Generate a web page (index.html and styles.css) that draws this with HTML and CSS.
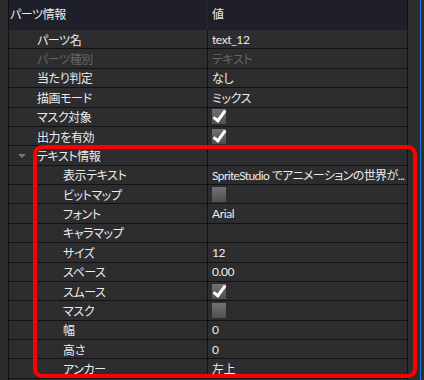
FILE: index.html
```html
<!DOCTYPE html>
<html lang="ja">
<head>
    <meta charset="UTF-8">
    <title>パーツ情報</title>
    <link rel="stylesheet" href="styles.css">
</head>
<body>

    <div class="window">
        <div class="side-left"></div>

        <!-- Property grid -->
        <div class="grid">
            <div class="head">
                <div class="cell label">パーツ情報</div>
                <div class="cell value">値</div>
            </div>

            <div class="row">
                <div class="cell label top">パーツ名</div>
                <div class="cell value">text_12</div>
            </div>
            <div class="row disabled">
                <div class="cell label top">パーツ種別</div>
                <div class="cell value">テキスト</div>
            </div>
            <div class="row">
                <div class="cell label top">当たり判定</div>
                <div class="cell value">なし</div>
            </div>
            <div class="row">
                <div class="cell label top">描画モード</div>
                <div class="cell value">ミックス</div>
            </div>
            <div class="row">
                <div class="cell label top">マスク対象</div>
                <div class="cell value"><span class="check on"></span></div>
            </div>
            <div class="row">
                <div class="cell label top">出力を有効</div>
                <div class="cell value"><span class="check on"></span></div>
            </div>

            <div class="row">
                <div class="cell label top"><span class="arrow"></span>テキスト情報</div>
                <div class="cell value"></div>
            </div>
            <div class="row">
                <div class="cell label child">表示テキスト</div>
                <div class="cell value long">SpriteStudio でアニメーションの世界が...</div>
            </div>
            <div class="row">
                <div class="cell label child">ビットマップ</div>
                <div class="cell value"><span class="check"></span></div>
            </div>
            <div class="row">
                <div class="cell label child">フォント</div>
                <div class="cell value">Arial</div>
            </div>
            <div class="row">
                <div class="cell label child">キャラマップ</div>
                <div class="cell value"></div>
            </div>
            <div class="row">
                <div class="cell label child">サイズ</div>
                <div class="cell value">12</div>
            </div>
            <div class="row">
                <div class="cell label child">スペース</div>
                <div class="cell value">0.00</div>
            </div>
            <div class="row">
                <div class="cell label child">スムース</div>
                <div class="cell value"><span class="check on"></span></div>
            </div>
            <div class="row">
                <div class="cell label child">マスク</div>
                <div class="cell value"><span class="check"></span></div>
            </div>
            <div class="row">
                <div class="cell label child">幅</div>
                <div class="cell value">0</div>
            </div>
            <div class="row">
                <div class="cell label child">高さ</div>
                <div class="cell value">0</div>
            </div>
            <div class="row">
                <div class="cell label child">アンカー</div>
                <div class="cell value">左上</div>
            </div>
        </div>

        <div class="side-right"></div>
        <div class="frame-edge"></div>
        <div class="side-outer"></div>
    </div>

    <!-- red annotation box -->
    <div class="highlight"></div>

</body>
</html>
```

FILE: styles.css
```css
body {
    margin: 0;
    background-color: #2d2d2f;
    font-family: Lato, "Noto Sans CJK JP", sans-serif;
    font-size: 12px;
    font-feature-settings: "palt" 1;
    letter-spacing: -0.4px;
    color: #ececec;
    position: relative;
    width: 424px;
    height: 380px;
    overflow: hidden;
}

.window {
    display: flex;
    height: 380px;
}

.side-left {
    width: 8px;
    background-color: #2b2b2d;
}

.grid {
    width: 398px;
    border-left: 1px solid #111;
    border-right: 1px solid #111;
    background-color: #2d2d2f;
}

.side-right {
    width: 12px;
    background-color: #2d2d2f;
}

.frame-edge {
    width: 1px;
    background-color: #1f77d2;
}

.side-outer {
    flex: 1;
    background-color: #2f2f31;
}

.head {
    display: flex;
    height: 30px;
    background-color: #1f1f29;
}

.head .cell {
    line-height: 30px;
}

.head .label {
    width: 197px;
    padding-left: 1px;
    border-right: 1px solid #24242e;
}

.row {
    display: flex;
    height: 19.375px;
    box-sizing: border-box;
    border-bottom: 1px solid #121212;
}

.cell {
    display: flex;
    align-items: center;
    white-space: nowrap;
    overflow: hidden;
}

.label {
    width: 198px;
    border-right: 1px solid #121212;
    position: relative;
}

.value {
    flex: 1;
    padding-left: 4px;
}

.value.long {
    letter-spacing: -0.6px;
}

.label.top {
    padding-left: 28px;
    width: 170px;
}

.label.child {
    padding-left: 54px;
    width: 144px;
}

.disabled {
    color: #666668;
}

.arrow {
    position: absolute;
    left: 9px;
    top: 8px;
    width: 0;
    height: 0;
    border-left: 4px solid transparent;
    border-right: 4px solid transparent;
    border-top: 4px solid #77777a;
}

.check {
    width: 14px;
    height: 15px;
    background: linear-gradient(#727274, #4f4f51);
    position: relative;
}

.check.on::after {
    content: "";
    position: absolute;
    left: 4px;
    top: -1px;
    width: 4px;
    height: 11px;
    border-right: 3px solid #fff;
    border-bottom: 3px solid #fff;
    transform: rotate(36deg);
}

.highlight {
    position: absolute;
    left: 33px;
    top: 145px;
    width: 376px;
    height: 225px;
    border: 4px solid #ff0000;
    border-radius: 9px;
}
```
